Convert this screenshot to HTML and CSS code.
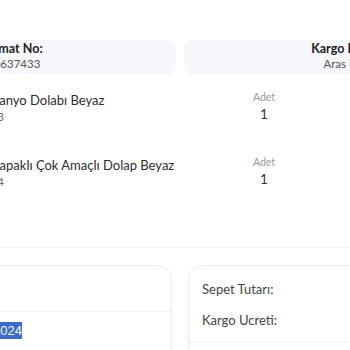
FILE: index.html
```html
<!DOCTYPE html>
<html lang="tr">
<head>
  <meta charset="UTF-8">
  <meta name="viewport" content="width=device-width, initial-scale=1.0">
  <title>Sipariş Detayı</title>
  <link rel="stylesheet" href="styles.css">
</head>
<body>
  <div class="page">
    <div class="info-row">
      <div class="info-box">
        <div class="info-label">Format No:</div>
        <div class="info-value">10637433</div>
      </div>
      <div class="info-box right">
        <div class="info-inner">
          <div class="info-label">Kargo Firması:</div>
          <div class="info-value">Aras Kargo</div>
        </div>
      </div>
    </div>

    <div class="products">
      <div class="product">
        <div class="product-img"></div>
        <div class="product-info">
          <div class="product-name">Banyo Dolabı Beyaz</div>
          <div class="product-code">#3</div>
        </div>
        <div class="qty">
          <div class="qty-label">Adet</div>
          <div class="qty-value">1</div>
        </div>
        <div class="price"></div>
      </div>
      <div class="product">
        <div class="product-img"></div>
        <div class="product-info">
          <div class="product-name">Kapaklı Çok Amaçlı Dolap Beyaz</div>
          <div class="product-code">#4</div>
        </div>
        <div class="qty">
          <div class="qty-label">Adet</div>
          <div class="qty-value">1</div>
        </div>
        <div class="price"></div>
      </div>
    </div>

    <div class="divider"></div>

    <div class="cards">
      <div class="card">
        <div class="card-head"></div>
        <div class="card-body">
          <span class="date">12.03.2024</span>
        </div>
      </div>
      <div class="card summary">
        <div class="sum-row">Sepet Tutarı:</div>
        <div class="sum-row">Kargo Ucreti:</div>
        <div class="sum-line"></div>
      </div>
    </div>
  </div>
</body>
</html>
```

FILE: styles.css
```css
body {
  margin: 0;
  background: #fff;
  font-family: "Lato", "Noto Sans", sans-serif;
  color: #333;
  overflow: hidden;
}
.page {
  width: 480px;
  margin-left: -60px;
  padding-top: 40px;
}
.info-row {
  display: grid;
  grid-template-columns: 1fr 1fr;
  gap: 8px;
}
.info-box {
  background: #f6f7fa;
  border-radius: 8px;
  padding: 1px 29px 2px 40px;
  height: 34px;
  box-sizing: border-box;
  font-size: 12.5px;
  line-height: 15px;
}
.info-box.right {
  text-align: right;
}
.info-inner {
  display: inline-block;
  text-align: center;
}
.info-label {
  font-weight: 700;
  color: #222;
}
.info-value {
  font-size: 11.5px;
  color: #555;
  margin-left: 7px;
}
.info-box.right .info-value {
  margin-left: 0;
}
.products {
  margin-top: 15px;
}
.product {
  display: flex;
  height: 65px;
}
.product-img {
  width: 40px;
  margin-left: 12px;
}
.product-info {
  flex: 1;
  padding-top: 2px;
  margin-left: -1px;
}
.product-name {
  font-size: 13px;
  line-height: 18px;
  color: #2c2c2c;
}
.product-code {
  font-size: 11px;
  line-height: 15px;
  color: #666;
}
.qty {
  width: 60px;
  text-align: center;
}
.qty-label {
  font-size: 10.5px;
  line-height: 16px;
  color: #999;
}
.qty-value {
  font-size: 13.5px;
  line-height: 18px;
  color: #333;
}
.price {
  width: 126px;
}
.divider {
  margin-top: 28px;
  height: 1px;
  background: #efefef;
}
.cards {
  display: grid;
  grid-template-columns: 1fr 1fr;
  gap: 16px;
  margin-top: 17px;
}
.card {
  border: 1px solid #ececec;
  border-radius: 14px;
  height: 120px;
}
.card-head {
  height: 45px;
  border-bottom: 1px solid #efefef;
}
.card-body {
  padding: 9px 13px 9px 16px;
  font-family: "Liberation Sans", Arial, sans-serif;
  font-size: 13px;
  line-height: 20px;
}
.date {
  background: #3a6bd0;
  color: #fff;
  padding: 1px 0;
}
.summary {
  padding: 13px 13px 0;
}
.sum-row {
  font-size: 13px;
  line-height: 20px;
  color: #444;
  margin-bottom: 11px;
}
.sum-row:nth-child(2) {
  margin-bottom: 12px;
}
.sum-line {
  height: 1px;
  background: #efefef;
  margin: 0 -13px;
}
```
